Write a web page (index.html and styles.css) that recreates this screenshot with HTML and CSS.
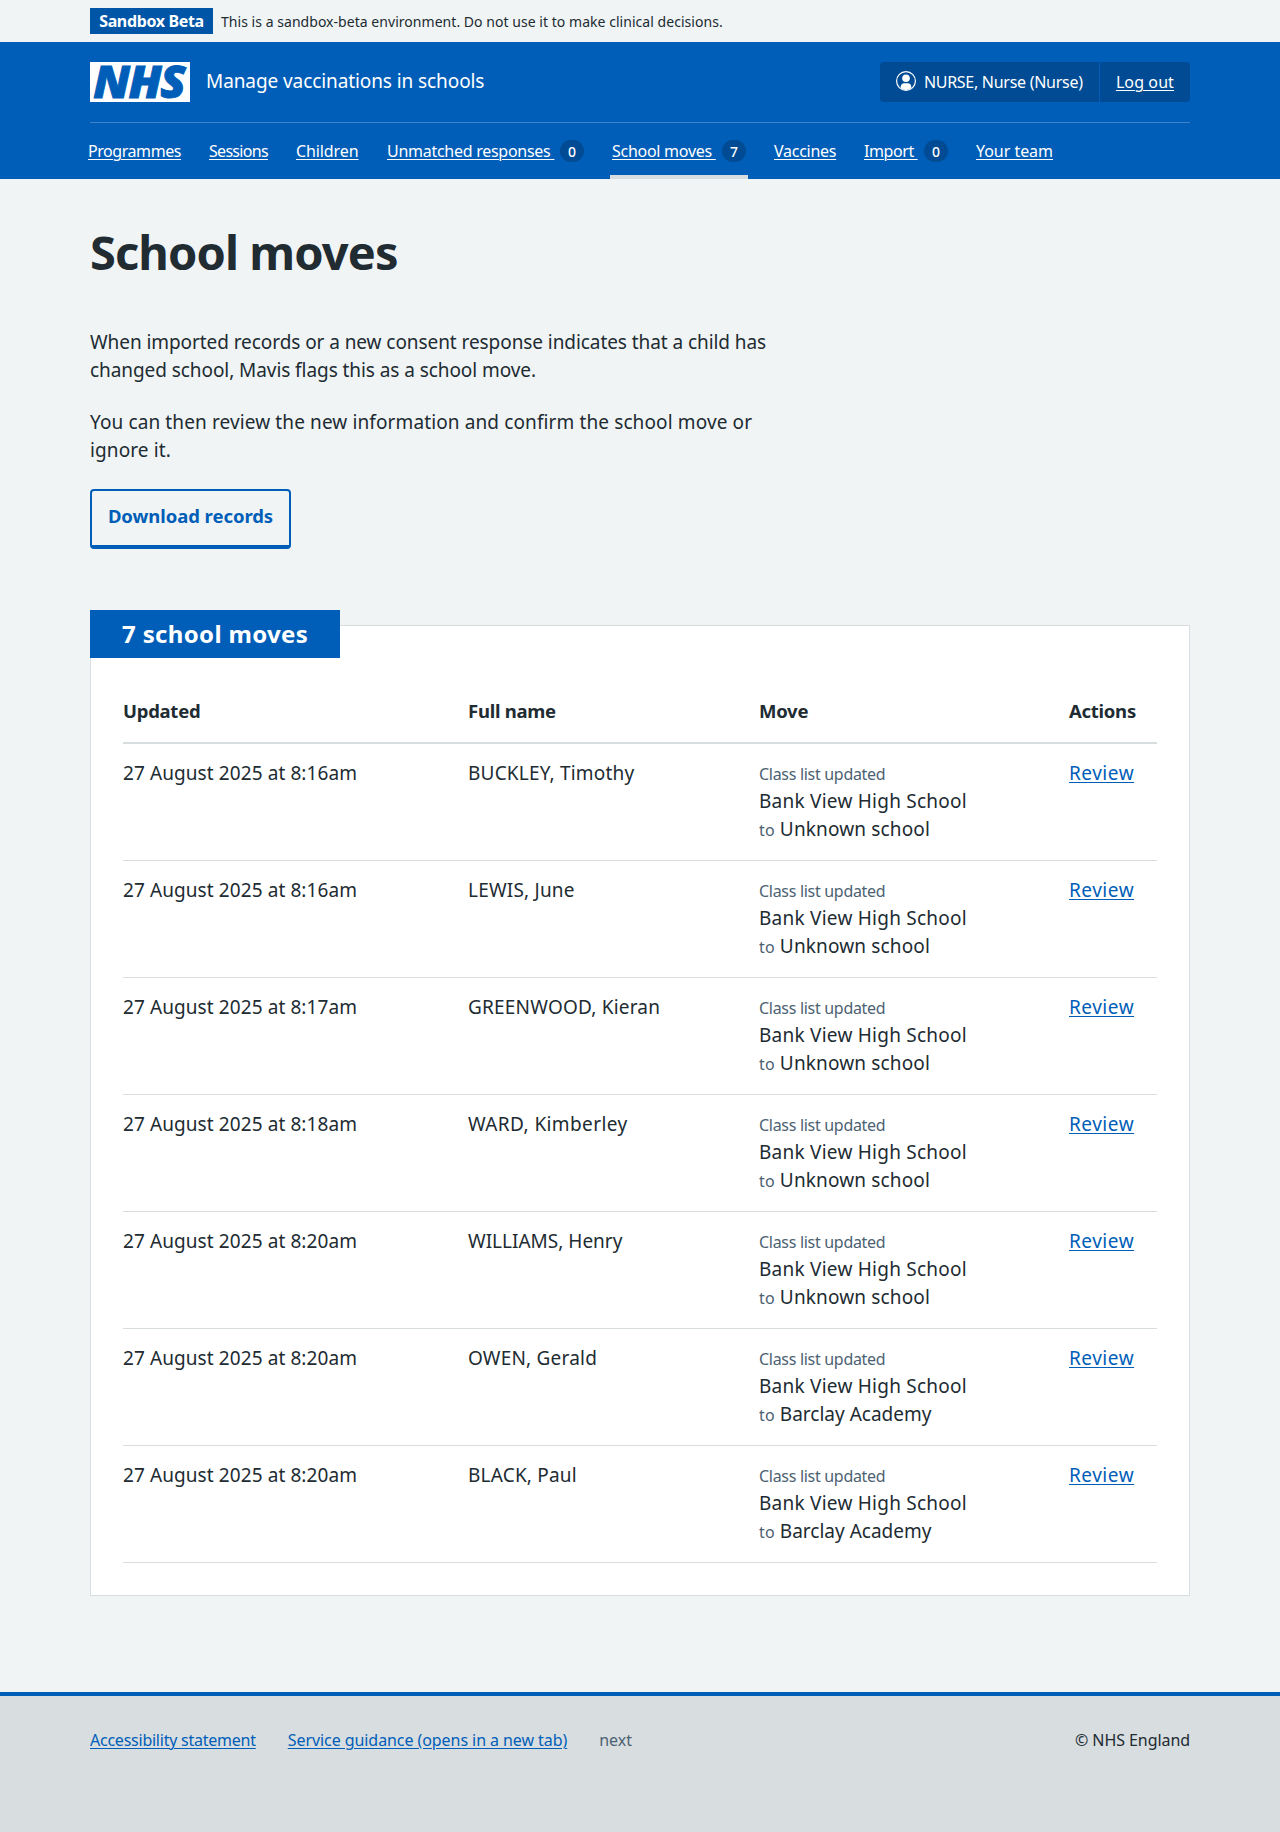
FILE: index.html
```html
<!DOCTYPE html>
<html lang="en">
<head>
<meta charset="utf-8">
<title>School moves – Manage vaccinations in schools</title>
<link rel="stylesheet" href="styles.css">
</head>
<body>
<div class="environment"><div class="container environment__inner">
  <strong class="environment__tag">Sandbox Beta</strong>
  <span class="environment__text">This is a sandbox-beta environment. Do not use it to make clinical decisions.</span>
</div></div>
<header class="header">
  <div class="container">
    <div class="header__top">
      <a class="service" href="#">
        <svg class="service__logo" width="100" height="40" viewBox="0 0 100 40" role="img" aria-label="NHS"><rect width="100" height="40" fill="#fff"/><text x="3.2" y="36.3" textLength="91" lengthAdjust="spacingAndGlyphs">NHS</text></svg>
        <span class="service__name">Manage vaccinations in schools</span>
      </a>
      <div class="account">
        <span class="account__item account__user">
          <svg width="20" height="20" viewBox="0 0 20 20" aria-hidden="true"><circle cx="10" cy="10" r="9.4" fill="none" stroke="#fff" stroke-width="1.2"/><circle cx="10" cy="7.3" r="3.8" fill="#fff"/><path d="M4.7 16.9v-1.1c0-2.1 1.5-3.6 3.3-3.6h4c1.8 0 3.3 1.5 3.3 3.6v1.1A8.7 8.7 0 0 1 10 19a8.700 8.700 0 0 1-5.300-2.100z" fill="#fff"/></svg>
          <span>NURSE, Nurse (Nurse)</span>
        </span>
        <span class="account__item"><a class="account__logout" href="#">Log out</a></span>
      </div>
    </div>
    <nav class="nav">
      <a class="nav__item nav__item--programmes" href="#"><span>Programmes</span></a>
      <a class="nav__item nav__item--sessions" href="#"><span>Sessions</span></a>
      <a class="nav__item nav__item--children" href="#"><span>Children</span></a>
      <a class="nav__item" href="#"><span>Unmatched responses </span><b class="badge">0</b></a>
      <a class="nav__item nav__item--current" href="#"><span>School moves </span><b class="badge">7</b></a>
      <a class="nav__item" href="#"><span>Vaccines</span></a>
      <a class="nav__item nav__item--import" href="#"><span>Import </span><b class="badge">0</b></a>
      <a class="nav__item nav__item--team" href="#"><span>Your team</span></a>
    </nav>
  </div>
</header>
<main class="container main">
  <h1>School moves</h1>
  <p class="intro">When imported records or a new consent response indicates that a child has changed school, Mavis flags this as a school move.</p>
  <p class="intro intro--next">You can then review the new information and confirm the school move or ignore it.</p>
  <a class="button" href="#">Download records</a>
  <section class="card">
    <h2 class="card__heading">7 school moves</h2>
    <table>
      <thead><tr><th class="col-updated">Updated</th><th class="col-name">Full name</th><th class="col-move">Move</th><th>Actions</th></tr></thead>
      <tbody>
        <tr><td>27 August 2025 at 8:16am</td><td class="name">BUCKLEY, Timothy</td><td class="move"><small>Class list updated</small><br>Bank View High School<br><small class="to">to</small> <span class="dest">Unknown school</span></td><td><a class="review" href="#">Review</a></td></tr>
        <tr><td>27 August 2025 at 8:16am</td><td class="name">LEWIS, June</td><td class="move"><small>Class list updated</small><br>Bank View High School<br><small class="to">to</small> <span class="dest">Unknown school</span></td><td><a class="review" href="#">Review</a></td></tr>
        <tr><td>27 August 2025 at 8:17am</td><td class="name">GREENWOOD, Kieran</td><td class="move"><small>Class list updated</small><br>Bank View High School<br><small class="to">to</small> <span class="dest">Unknown school</span></td><td><a class="review" href="#">Review</a></td></tr>
        <tr><td>27 August 2025 at 8:18am</td><td class="name name--wide">WARD, Kimberley</td><td class="move"><small>Class list updated</small><br>Bank View High School<br><small class="to">to</small> <span class="dest">Unknown school</span></td><td><a class="review" href="#">Review</a></td></tr>
        <tr><td>27 August 2025 at 8:20am</td><td class="name name--narrow">WILLIAMS, Henry</td><td class="move"><small>Class list updated</small><br>Bank View High School<br><small class="to">to</small> <span class="dest">Unknown school</span></td><td><a class="review" href="#">Review</a></td></tr>
        <tr><td>27 August 2025 at 8:20am</td><td class="name">OWEN, Gerald</td><td class="move"><small>Class list updated</small><br>Bank View High School<br><small class="to">to</small> <span class="dest dest--academy">Barclay Academy</span></td><td><a class="review" href="#">Review</a></td></tr>
        <tr><td>27 August 2025 at 8:20am</td><td class="name">BLACK, Paul</td><td class="move"><small>Class list updated</small><br>Bank View High School<br><small class="to">to</small> <span class="dest dest--academy">Barclay Academy</span></td><td><a class="review" href="#">Review</a></td></tr>
      </tbody>
    </table>
  </section>
</main>
<footer class="footer"><div class="container footer__inner">
  <a class="footer__accessibility" href="#">Accessibility statement</a>
  <a class="footer__guidance" href="#">Service guidance (opens in a new tab)</a>
  <span class="footer__version">next</span>
  <span class="footer__copyright">© NHS England</span>
</div></footer>
</body>
</html>
```
FILE: styles.css
```css
* { box-sizing: border-box; }
body {
  margin: 0;
  min-height: 1832px;
  display: flex;
  flex-direction: column;
  background: #f0f4f5;
  color: #212b32;
  font: 400 19px/28px "Noto Sans", "Open Sans", sans-serif;
}
a { color: #005eb8; text-decoration-thickness: 1px; text-underline-offset: 2px; }
.container { width: 1100px; margin: 0 auto; }

.environment { height: 42px; padding-top: 8px; }
.environment__inner { display: flex; align-items: flex-start; gap: 8px; }
.environment__tag {
  width: 123px;
  height: 26px;
  background: #0055a6;
  color: #fff;
  font-size: 16px;
  font-weight: 700;
  line-height: 26px;
  text-align: center;
  letter-spacing: -0.35px;
}
.environment__text { font-size: 14px; line-height: 28px; letter-spacing: 0.04px; }

.header { height: 137px; background: #005eb8; color: #fff; }
.header a { color: #fff; }
.header__top {
  display: flex;
  justify-content: space-between;
  align-items: center;
  height: 81px;
  border-bottom: 1px solid #3d84c8;
}
.header .service { display: flex; align-items: center; gap: 16px; text-decoration: none; }
.service__logo { display: block; overflow: visible; }
.service__logo text {
  fill: #005eb8;
  stroke: #005eb8;
  stroke-width: 0.9px;
  font: italic 800 45px "Open Sans", sans-serif;
  letter-spacing: -1.5px;
}
.service__name { margin-top: -2px; letter-spacing: -0.09px; }
.account {
  display: flex;
  height: 40px;
  background: #004b93;
  border-radius: 4px;
  font-size: 16px;
  line-height: 40px;
}
.account__item { padding: 0 16px; }
.account__item + .account__item { border-left: 1px solid #005eb8; }
.account__user { display: flex; width: 219px; gap: 8px; letter-spacing: -0.28px; white-space: nowrap; }
.account__user svg { margin-top: 9px; flex: none; }
.account__logout { letter-spacing: 0.1px; }

.nav {
  display: grid;
  grid-template-columns: 97px 63px 67px 201px 138px 66px 88px 81px;
  gap: 24px;
  height: 56px;
  margin-left: -4px;
}
.nav__item {
  display: flex;
  padding: 16px 2px 0;
  font-size: 16px;
  line-height: 24px;
  letter-spacing: -0.27px;
  white-space: pre;
  text-decoration: none;
}
.nav__item span { text-decoration: underline 1px; text-underline-offset: 2px; }
.nav__item--programmes { letter-spacing: -0.44px; }
.nav__item--sessions { letter-spacing: -0.7px; }
.nav__item--children { letter-spacing: -0.1px; }
.nav__item--import { letter-spacing: -0.4px; }
.nav__item--team { letter-spacing: -0.04px; }
.nav__item--current { border-bottom: 4px solid #d8dde0; }
.badge {
  width: 24px;
  height: 22px;
  margin: 1px 0 0 auto;
  border-radius: 12px;
  background: #004b93;
  font-size: 14px;
  font-weight: 500;
  line-height: 23px;
  letter-spacing: 0;
  text-align: center;
}

.main { flex: 1; padding-top: 40px; }
h1 {
  margin: 0 0 49px;
  padding-top: 6px;
  font-size: 47px;
  line-height: 54px;
  font-weight: 700;
  letter-spacing: -0.9px;
}
.intro { width: 690px; margin: 0 0 24px; letter-spacing: -0.07px; }
.intro--next { margin-bottom: 25px; letter-spacing: 0.115px; }
.button {
  display: block;
  width: 201px;
  height: 60px;
  padding-top: 11px;
  border: 2px solid #005eb8;
  border-bottom-width: 4px;
  border-radius: 4px;
  font-size: 18.5px;
  font-weight: 700;
  text-align: center;
  text-decoration: none;
  letter-spacing: -0.06px;
}
.card {
  height: 971px;
  margin-top: 76px;
  padding: 0 32px;
  background: #fff;
  border: 1px solid #d8dde0;
}
.card__heading {
  width: 250px;
  height: 48px;
  margin: -16px 0 0 -33px;
  padding-left: 32px;
  background: #005eb8;
  color: #fff;
  font-size: 24px;
  font-weight: 700;
  line-height: 47px;
  letter-spacing: 0.34px;
}
table { width: 100%; margin-top: 24px; border-collapse: separate; border-spacing: 0; table-layout: fixed; }
th {
  height: 62px;
  padding: 15px 0;
  border-bottom: 2px solid #d8dde0;
  font-size: 18.5px;
  font-weight: 700;
  text-align: left;
  vertical-align: top;
  letter-spacing: -0.27px;
}
.col-updated { width: 345px; }
.col-name { width: 291px; }
.col-move { width: 310px; }
td { height: 117px; padding: 15px 0; border-bottom: 1px solid #d8dde0; vertical-align: top; letter-spacing: 0.09px; }
.name { letter-spacing: 0.2px; }
.name--wide { letter-spacing: 0.4px; }
.name--narrow { letter-spacing: 0; }
.move { letter-spacing: 0.24px; }
.move small { color: #4c6272; font-size: 16px; line-height: 1; letter-spacing: -0.3px; }
.move .to { letter-spacing: 0.1px; }
.dest { letter-spacing: 0.15px; }
.dest--academy { letter-spacing: 0; }
.review { letter-spacing: 0.52px; }

.footer { height: 140px; border-top: 4px solid #005eb8; background: #d8dde0; font-size: 16px; line-height: 24px; }
.footer__inner { display: flex; gap: 32px; padding-top: 32px; }
.footer__accessibility { letter-spacing: -0.24px; }
.footer__guidance { letter-spacing: -0.07px; }
.footer__version { color: #4c6272; }
.footer__copyright { margin-left: auto; letter-spacing: -0.07px; }
```
